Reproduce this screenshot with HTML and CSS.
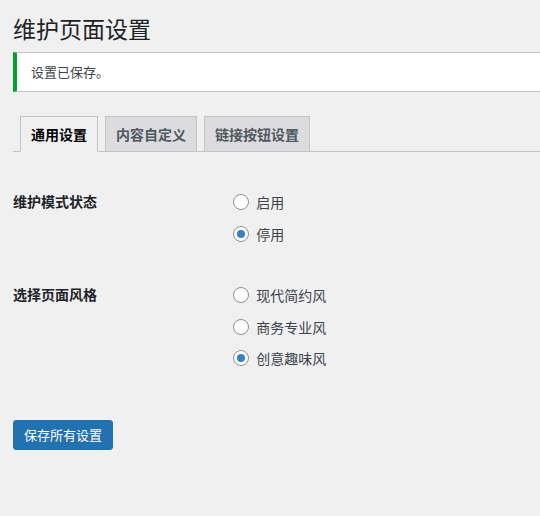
FILE: index.html
```html
<!DOCTYPE html>
<html lang="zh-CN">
<head>
<meta charset="utf-8">
<title>维护页面设置</title>
<link rel="stylesheet" href="styles.css">
</head>
<body>
<div class="wrap">
  <h1 class="page-title">维护页面设置</h1>
  <div class="notice"><p>设置已保存。</p></div>
  <nav class="tabs">
    <a class="tab active">通用设置</a>
    <a class="tab">内容自定义</a>
    <a class="tab">链接按钮设置</a>
  </nav>
  <form class="form">
    <div class="row">
      <div class="th">维护模式状态</div>
      <div class="td">
        <label class="opt"><input type="radio" name="mode"> 启用</label>
        <label class="opt"><input type="radio" name="mode" checked> 停用</label>
      </div>
    </div>
    <div class="row">
      <div class="th">选择页面风格</div>
      <div class="td">
        <label class="opt"><input type="radio" name="style"> 现代简约风</label>
        <label class="opt"><input type="radio" name="style"> 商务专业风</label>
        <label class="opt"><input type="radio" name="style" checked> 创意趣味风</label>
      </div>
    </div>
    <div class="submit">
      <button type="button" class="btn">保存所有设置</button>
    </div>
  </form>
</div>
</body>
</html>
```
FILE: styles.css
```css
html, body {
  margin: 0;
  padding: 0;
  background: #f0f0f1;
  overflow: hidden;
}
body {
  font-family: "Noto Sans CJK SC", "Noto Sans", sans-serif;
  font-size: 13px;
  color: #3c434a;
}
.wrap {
  padding-left: 13px;
}
.page-title {
  margin: 0;
  padding-top: 14px;
  font-size: 23px;
  font-weight: 400;
  line-height: 29px;
  color: #1d2327;
}
.notice {
  margin-top: 9px;
  background: #fff;
  border: 1px solid #c3c4c7;
  border-left: 4px solid #00a32a;
  border-right: 0;
  padding: 9px 12px 9px 14px;
}
.notice p {
  margin: 0;
  line-height: 20px;
  font-size: 13px;
}
.tabs {
  margin-top: 24px;
  display: flex;
  border-bottom: 1px solid #c3c4c7;
}
.tab {
  margin-left: 7px;
  margin-bottom: -1px;
  padding: 5px 10px;
  font-size: 14px;
  font-weight: 600;
  line-height: 24px;
  color: #50575e;
  background: #dcdcde;
  border: 1px solid #c3c4c7;
}
.tab.active {
  background: #f0f0f1;
  color: #000;
  border-bottom-color: #f0f0f1;
}
.form {
  padding-top: 34.25px;
}
.row {
  display: flex;
  margin-bottom: 30px;
}
.th {
  width: 210px;
  flex: none;
  padding-top: 5px;
  font-size: 14px;
  font-weight: 600;
  line-height: 20px;
  color: #1d2327;
}
.td {
  padding-left: 10px;
  display: flex;
  flex-direction: column;
}
.opt {
  height: 31.5px;
  display: flex;
  align-items: center;
  font-size: 14px;
  color: #3c434a;
  white-space: pre;
}
.opt input {
  appearance: none;
  -webkit-appearance: none;
  width: 16px;
  height: 16px;
  margin: 0 4px 0 0;
  border: 1px solid #8c8f94;
  border-radius: 50%;
  background: #fff;
  box-sizing: border-box;
  display: flex;
  align-items: center;
  justify-content: center;
}
.opt input:checked::before {
  content: "";
  width: 8px;
  height: 8px;
  border-radius: 50%;
  background: #3582c4;
}
.submit {
  padding-top: 16.25px;
}
.btn {
  height: 30px;
  padding: 0 10px;
  border: 1px solid #2271b1;
  border-radius: 3px;
  background: #2271b1;
  color: #fff;
  font-family: inherit;
  font-size: 13px;
  line-height: 28px;
}
```
